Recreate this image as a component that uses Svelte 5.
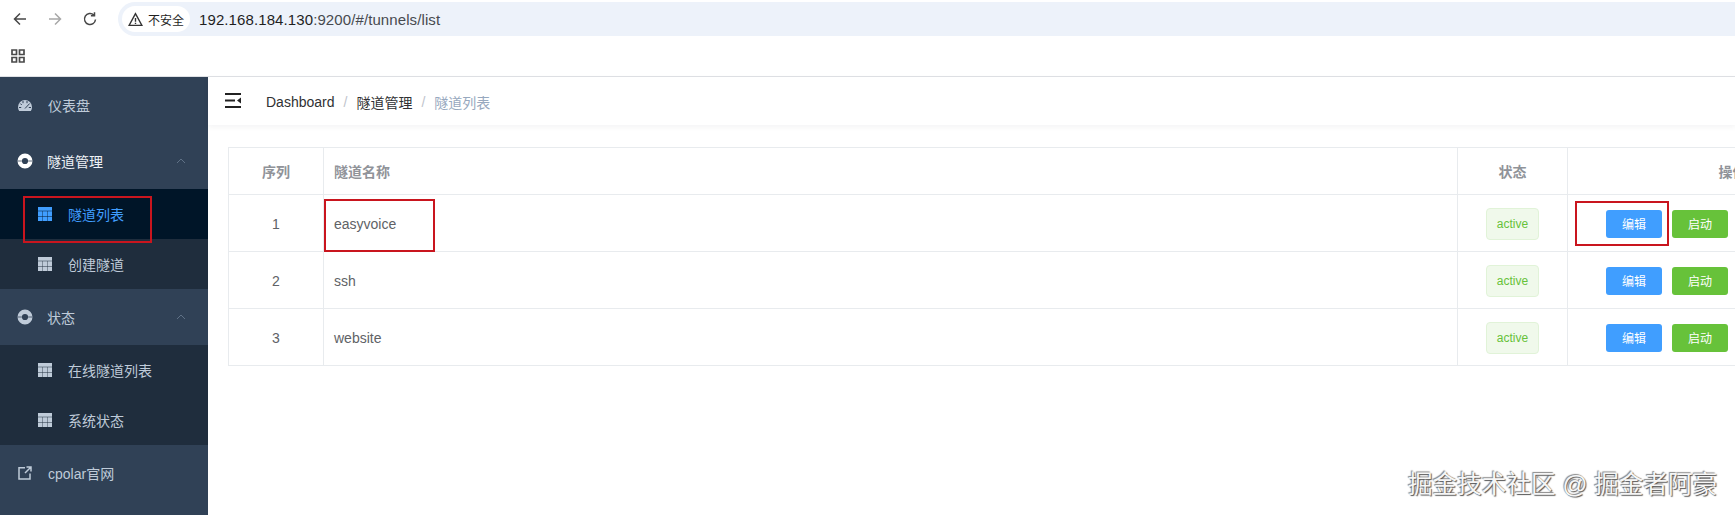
<script>
  const rows = [
    { id: 1, name: 'easyvoice' },
    { id: 2, name: 'ssh' },
    { id: 3, name: 'website' }
  ];
  const crumbs = ['Dashboard', '隧道管理'];
  const gridPath = 'M0 0h14v3.800H0zM0 4.300h4.400V9H0zM4.800 4.300h4.400V9H4.800zM9.600 4.300H14V9H9.600zM0 9.400h4.400V14H0zM4.800 9.400h4.400V14H4.800zM9.600 9.400H14V14H9.600z';
  const ringPath = 'M8 .5a7.500 7.500 0 1 0 0 15 7.500 7.500 0 0 0 0-15Zm0 4.400a3.100 3.100 0 1 1 0 6.200 3.100 3.100 0 0 1 0-6.200Z';
</script>

<div class="page">
  <header class="chrome">
    <div class="toolbar">
      <div class="navs">
        <svg class="nav" viewBox="0 0 16 16"><path d="M14 8H2.500M8 2.500 2.500 8 8 13.500" /></svg>
        <svg class="nav off" viewBox="0 0 16 16"><path d="M2 8h11.500M8 2.500 13.500 8 8 13.500" /></svg>
        <svg class="nav" viewBox="0 0 16 16"><path d="M13.500 8.500A5.500 5.500 0 1 1 11.800 4M12.500 1.200v3.600H8.900" /></svg>
      </div>
      <div class="omnibox">
        <div class="chip">
          <svg class="warn" viewBox="0 0 14 14"><path d="M7 1.500 1 12.500h12ZM7 5.500v3.500M7 10v1.200" /></svg>
          <span>不安全</span>
        </div>
        <span class="url">192.168.184.130<span class="dim">:9200/#/tunnels/list</span></span>
      </div>
    </div>
    <div class="bookmarks">
      <svg class="apps" viewBox="0 0 14 14"><path d="M1 1h4.500v4.500H1zM8.500 1H13v4.500H8.500zM1 8.500h4.500V13H1zM8.500 8.500H13V13H8.500z" /></svg>
    </div>
  </header>

  <div class="shell">
    <aside class="sidebar">
      <div class="item">
        <svg class="ico" viewBox="0 0 14 11">
          <path class="fill" d="M7 0A7 7 0 0 0 0 7c0 1.500.4 2.900 1.200 4h11.600c.8-1.100 1.200-2.500 1.200-4a7 7 0 0 0-7-7Z" />
          <path class="cut" d="M5 1v2.200M9 1v2.200M2.300 3.500l1.500 1.500M1 7.500h2.200M10.800 7.500H13M11.700 3.500 7 8.500" />
        </svg>
        <span class="label">仪表盘</span>
      </div>

      <div class="item group bright">
        <svg class="ring" viewBox="0 0 16 16"><path class="disc" fill-rule="evenodd" d={ringPath} /><path class="notch" d="M.5 8h4.400M11.100 8h4.400" /></svg>
        <span class="label">隧道管理</span>
        <svg class="chev" viewBox="0 0 10 6"><path d="M1 5 5 1l4 4" /></svg>
      </div>
      <div class="sub">
        <div class="subitem active">
          <svg class="grid" viewBox="0 0 14 14"><path d={gridPath} /></svg>
          <span>隧道列表</span>
        </div>
        <div class="subitem">
          <svg class="grid" viewBox="0 0 14 14"><path d={gridPath} /></svg>
          <span>创建隧道</span>
        </div>
      </div>

      <div class="item group">
        <svg class="ring" viewBox="0 0 16 16"><path class="disc" fill-rule="evenodd" d={ringPath} /><path class="notch" d="M.5 8h4.400M11.100 8h4.400" /></svg>
        <span class="label">状态</span>
        <svg class="chev" viewBox="0 0 10 6"><path d="M1 5 5 1l4 4" /></svg>
      </div>
      <div class="sub">
        <div class="subitem">
          <svg class="grid" viewBox="0 0 14 14"><path d={gridPath} /></svg>
          <span>在线隧道列表</span>
        </div>
        <div class="subitem">
          <svg class="grid" viewBox="0 0 14 14"><path d={gridPath} /></svg>
          <span>系统状态</span>
        </div>
      </div>

      <div class="item">
        <svg class="ext" viewBox="0 0 14 14"><path d="M7 1.800H1v11.200h11V7.500M8.500 1H13v4.500M13 1 7 7" /></svg>
        <span class="label">cpolar官网</span>
      </div>
    </aside>

    <main class="main">
      <div class="navbar">
        <svg class="hamburger" viewBox="0 0 16 15"><path class="bars" d="M0 1h16M0 7.500h10M0 14h16" /><path class="tip" d="M16 4.500v6l-4-3z" /></svg>
        <nav class="crumbs">
          {#each crumbs as c}
            <span class="crumb">{c}</span><span class="sep">/</span>
          {/each}
          <span class="crumb last">隧道列表</span>
        </nav>
      </div>

      <div class="content">
        <table>
          <colgroup>
            <col class="c1" /><col class="c2" /><col class="c3" /><col class="c4" />
          </colgroup>
          <thead>
            <tr>
              <th class="center">序列</th>
              <th class="left">隧道名称</th>
              <th class="center">状态</th>
              <th class="center">操作</th>
            </tr>
          </thead>
          <tbody>
            {#each rows as r}
              <tr>
                <td class="center">{r.id}</td>
                <td class="left">{r.name}</td>
                <td class="center"><span class="tag">active</span></td>
                <td>
                  <div class="actions">
                    <button class="btn blue">编辑</button>
                    <button class="btn green">启动</button>
                  </div>
                </td>
              </tr>
            {/each}
          </tbody>
        </table>
      </div>
    </main>
  </div>

  <div class="mark m1"></div>
  <div class="mark m2"></div>
  <div class="mark m3"></div>
  <div class="watermark">掘金技术社区 @ 掘金者阿豪</div>
</div>

<style>
  :global(body) {
    margin: 0;
    overflow: hidden;
    background: #fff;
  }
  .page {
    position: relative;
    width: 1735px;
    height: 515px;
    overflow: hidden;
    font-family: "Liberation Sans", "Noto Sans CJK SC", sans-serif;
    font-size: 14px;
    display: flex;
    flex-direction: column;
  }
  .chrome {
    height: 77px;
    box-sizing: border-box;
    border-bottom: 1px solid #dfe1e5;
    flex: none;
  }
  .toolbar {
    height: 41px;
    display: flex;
    align-items: center;
    padding-left: 12px;
    box-sizing: border-box;
  }
  .navs {
    display: flex;
    gap: 19px;
    width: 106px;
    flex: none;
    margin-top: -3px;
  }
  .nav {
    width: 16px;
    height: 16px;
    fill: none;
    stroke: #474747;
    stroke-width: 1.500;
  }
  .nav.off {
    stroke: #a8a8a8;
  }
  .omnibox {
    flex: 1;
    height: 34px;
    margin-top: -3px;
    background: #edf2fa;
    border-radius: 17px 0 0 17px;
    display: flex;
    align-items: center;
    padding-left: 4px;
  }
  .chip {
    height: 26px;
    background: #fff;
    border-radius: 13px;
    display: flex;
    align-items: center;
    gap: 5px;
    padding: 0 6px;
    font-size: 12px;
    color: #1f1f1f;
  }
  .warn {
    width: 15px;
    height: 15px;
    fill: none;
    stroke: #333;
    stroke-width: 1.300;
  }
  .url {
    margin-left: 9px;
    font-size: 15px;
    letter-spacing: 0.1px;
    color: #1f1f1f;
  }
  .url .dim {
    color: #474a4f;
  }
  .bookmarks {
    height: 35px;
    display: flex;
    align-items: center;
    padding-left: 11px;
    padding-bottom: 5px;
    box-sizing: border-box;
  }
  .apps {
    width: 14px;
    height: 14px;
    fill: none;
    stroke: #4a4a4a;
    stroke-width: 1.700;
  }
  .shell {
    flex: 1;
    display: flex;
    min-height: 0;
  }
  .sidebar {
    width: 208px;
    flex: none;
    background: #304156;
    color: #bfcbd9;
    box-sizing: border-box;
  }
  .item {
    height: 56px;
    display: flex;
    align-items: center;
    padding-left: 18px;
    position: relative;
  }
  .item.bright .label {
    color: #eef2f6;
  }
  .ico {
    width: 14px;
    height: 11px;
    flex: none;
    margin-right: 16px;
  }
  .ext {
    width: 14px;
    height: 14px;
    flex: none;
    margin-right: 16px;
    fill: none;
    stroke: #bfcbd9;
    stroke-width: 1.500;
  }
  .fill {
    fill: #bfcbd9;
  }
  .cut {
    fill: none;
    stroke: #304156;
    stroke-width: 1;
  }
  .ring {
    width: 16px;
    height: 16px;
    flex: none;
    margin-right: 14px;
    margin-left: -1px;
  }
  .disc {
    fill: #bfcbd9;
  }
  .bright .disc {
    fill: #fff;
  }
  .notch {
    fill: none;
    stroke: #304156;
    stroke-width: 1.400;
    opacity: 0.5;
  }
  .chev {
    position: absolute;
    right: 22px;
    top: 25px;
    width: 10px;
    height: 6px;
    fill: none;
    stroke: #5f7186;
    stroke-width: 1;
  }
  .sub {
    background: #1f2d3d;
  }
  .subitem {
    height: 50px;
    display: flex;
    align-items: center;
    padding-left: 38px;
    box-sizing: border-box;
  }
  .subitem.active {
    background: #001528;
    color: #409eff;
  }
  .grid {
    width: 14px;
    height: 14px;
    flex: none;
    margin-right: 16px;
    fill: currentColor;
    margin-top: -1px;
  }
  .main {
    flex: 1;
    min-width: 0;
    display: flex;
    flex-direction: column;
  }
  .navbar {
    height: 48px;
    flex: none;
    display: flex;
    align-items: center;
    padding-left: 17px;
    box-shadow: 0 2px 6px rgba(0, 21, 41, 0.05);
    box-sizing: border-box;
  }
  .hamburger {
    width: 16px;
    height: 15px;
    flex: none;
    margin-right: 25px;
    margin-top: -1px;
  }
  .bars {
    fill: none;
    stroke: #222;
    stroke-width: 1.800;
  }
  .tip {
    fill: #222;
  }
  .crumbs {
    display: flex;
    align-items: center;
    color: #303133;
    margin-top: 1px;
  }
  .sep {
    color: #c0c4cc;
    margin: 0 9px;
  }
  .last {
    color: #97a8be;
  }
  .content {
    padding: 22px 0 0 20px;
  }
  table {
    border-collapse: collapse;
    table-layout: fixed;
    width: 1669px;
    color: #606266;
    font-size: 14px;
  }
  .c1 { width: 95px; }
  .c2 { width: 1134px; }
  .c3 { width: 110px; }
  .c4 { width: 330px; }
  th,
  td {
    border: 1px solid #e8ebee;
    padding: 0 10px;
  }
  th {
    height: 46px;
    color: #909399;
    font-size: 14px;
    font-weight: 700;
  }
  td {
    height: 55px;
    padding-top: 1px;
  }
  .center {
    text-align: center;
  }
  .left {
    text-align: left;
  }
  .tag {
    display: inline-block;
    box-sizing: border-box;
    width: 53px;
    height: 32px;
    line-height: 30px;
    font-size: 12px;
    color: #67c23a;
    background: #f0f9eb;
    border: 1px solid #e1f3d8;
    border-radius: 4px;
    vertical-align: middle;
  }
  .actions {
    display: flex;
    gap: 10px;
    padding-left: 28px;
  }
  .btn {
    width: 56px;
    height: 28px;
    padding: 0;
    border: 0;
    border-radius: 3px;
    color: #fff;
    font: inherit;
    font-size: 12px;
  }
  .blue {
    background: #409eff;
  }
  .green {
    background: #67c23a;
  }
  .mark {
    position: absolute;
    box-sizing: border-box;
    border: 2px solid #c9151e;
  }
  .m1 {
    left: 23px;
    top: 196px;
    width: 129px;
    height: 47px;
  }
  .m2 {
    left: 324px;
    top: 199px;
    width: 111px;
    height: 53px;
  }
  .m3 {
    left: 1575px;
    top: 201px;
    width: 94px;
    height: 45px;
  }
  .watermark {
    position: absolute;
    left: 1408px;
    top: 470px;
    font-size: 24.6px;
    line-height: 30px;
    white-space: nowrap;
    color: #f6f6f6;
    text-shadow: 1px 1px 1px #555, -1px -1px 1px #888;
  }
</style>
